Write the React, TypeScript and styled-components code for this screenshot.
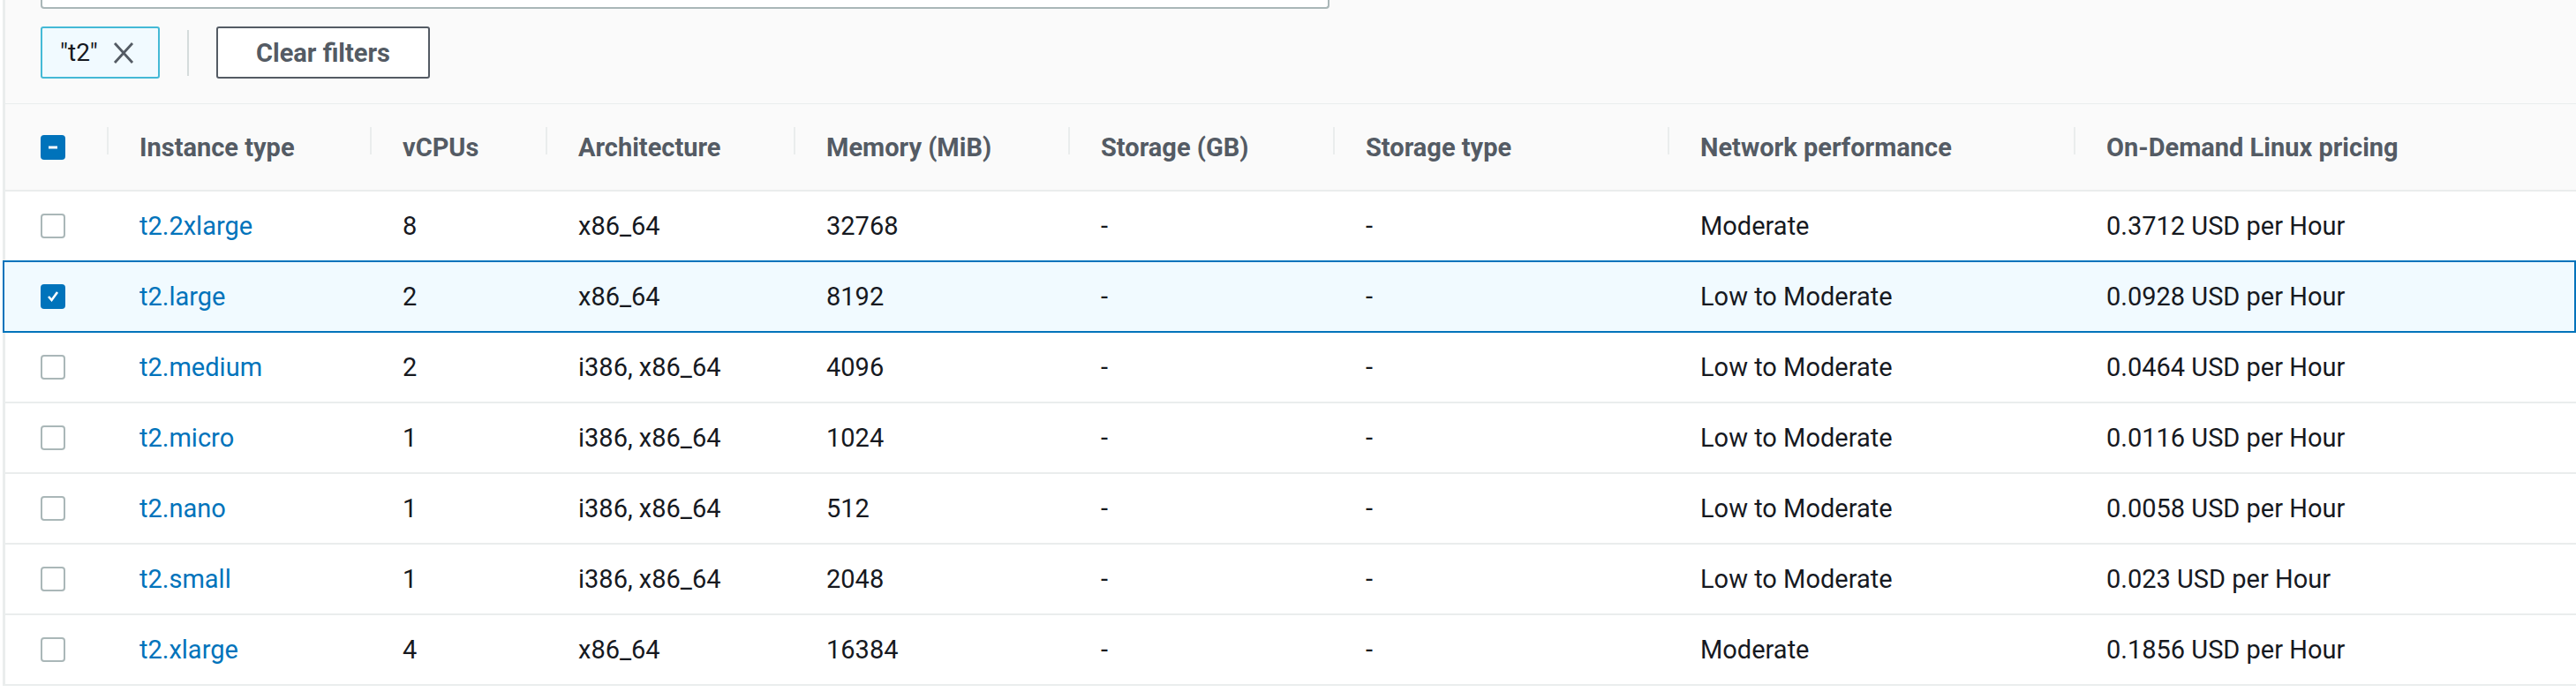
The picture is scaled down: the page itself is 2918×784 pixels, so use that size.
import React from "react";
import styled, { createGlobalStyle, css } from "styled-components";

const cols = "115px 298px 199px 281px 311px 300px 379px 460px 1fr";

const headers = [
  "Instance type",
  "vCPUs",
  "Architecture",
  "Memory (MiB)",
  "Storage (GB)",
  "Storage type",
  "Network performance",
  "On-Demand Linux pricing",
];

const rows = [
  ["t2.2xlarge", "8", "x86_64", "32768", "Moderate", "0.3712 USD per Hour"],
  ["t2.large", "2", "x86_64", "8192", "Low to Moderate", "0.0928 USD per Hour"],
  ["t2.medium", "2", "i386, x86_64", "4096", "Low to Moderate", "0.0464 USD per Hour"],
  ["t2.micro", "1", "i386, x86_64", "1024", "Low to Moderate", "0.0116 USD per Hour"],
  ["t2.nano", "1", "i386, x86_64", "512", "Low to Moderate", "0.0058 USD per Hour"],
  ["t2.small", "1", "i386, x86_64", "2048", "Low to Moderate", "0.023 USD per Hour"],
  ["t2.xlarge", "4", "x86_64", "16384", "Moderate", "0.1856 USD per Hour"],
];

export default function App() {
  return (
    <>
      <Global />
      <S.Page>
        <S.Toolbar>
          <S.Search />
          <S.Filters>
            <S.Token>
              "t2"
              <svg width="26" height="28" viewBox="0 0 26 28">
                <path d="M3 3 L23 25 M23 3 L3 25" stroke="#545b64" strokeWidth="2.8" fill="none" />
              </svg>
            </S.Token>
            <S.Divider />
            <S.Button>Clear filters</S.Button>
          </S.Filters>
        </S.Toolbar>
        <S.Head>
          <S.HeadCell $first>
            <S.Check $on>
              <svg width="16" height="16" viewBox="0 0 16 16">
                <path d="M3 8 H13" stroke="#fff" strokeWidth="3" />
              </svg>
            </S.Check>
          </S.HeadCell>
          {headers.map((h) => (
            <S.HeadCell key={h}>
              <S.Sep />
              {h}
            </S.HeadCell>
          ))}
          <S.HeadCell />
        </S.Head>
        {rows.map((r, i) => (
          <S.Row key={r[0]} $selected={i === 1}>
            <S.Cell $first>
              <S.Check $on={i === 1}>
                {i === 1 && (
                  <svg width="18" height="18" viewBox="0 0 18 18">
                    <path d="M4 9 L7.5 13 L14 4" stroke="#fff" strokeWidth="2.6" fill="none" />
                  </svg>
                )}
              </S.Check>
            </S.Cell>
            <S.Cell>
              <S.Link>{r[0]}</S.Link>
            </S.Cell>
            <S.Cell>{r[1]}</S.Cell>
            <S.Cell>{r[2]}</S.Cell>
            <S.Cell>{r[3]}</S.Cell>
            <S.Cell>-</S.Cell>
            <S.Cell>-</S.Cell>
            <S.Cell>{r[4]}</S.Cell>
            <S.Cell>{r[5]}</S.Cell>
            <S.Cell />
          </S.Row>
        ))}
      </S.Page>
    </>
  );
}

const Global = createGlobalStyle`
  body {
    margin: 0;
    background: #fff;
    font-family: Roboto, "Liberation Sans", sans-serif;
    color: #16191f;
  }
`;

const S = {
  Page: styled.div`
    border-left: 3px solid #eaeded;
    margin-left: 3px;
    width: 2912px;
  `,
  Toolbar: styled.div`
    background: #fafafa;
    height: 117px;
    border-bottom: 1px solid #eaeded;
    padding-left: 40px;
  `,
  Search: styled.div`
    width: 1456px;
    height: 8px;
    border: 2px solid #aab7b8;
    border-top: none;
    border-radius: 0 0 4px 4px;
    background: #fff;
  `,
  Filters: styled.div`
    display: flex;
    align-items: center;
    margin-top: 20px;
    height: 59px;
  `,
  Token: styled.div`
    display: flex;
    align-items: center;
    gap: 16px;
    box-sizing: border-box;
    width: 135px;
    height: 59px;
    padding-left: 20px;
    border: 2px solid #44b9d6;
    border-radius: 3px;
    background: #f1faff;
    font-size: 28px;
  `,
  Divider: styled.div`
    width: 2px;
    height: 52px;
    background: #d5dbdb;
    margin: 0 31px;
  `,
  Button: styled.div`
    box-sizing: border-box;
    width: 242px;
    height: 59px;
    border: 2px solid #545b64;
    border-radius: 3px;
    background: #fff;
    display: flex;
    align-items: center;
    justify-content: center;
    font-weight: 700;
    font-size: 29px;
    color: #545b64;
  `,
  Head: styled.div`
    display: grid;
    grid-template-columns: ${cols};
    grid-template-rows: 1fr;
    height: 99px;
    background: #fafafa;
    border-bottom: 2px solid #eaeded;
    box-sizing: border-box;
  `,
  HeadCell: styled.div<{ $first?: boolean }>`
    position: relative;
    display: flex;
    align-items: center;
    padding-top: 16px;
    padding-left: ${(p) => (p.$first ? "40px" : "37px")};
    font-weight: 700;
    font-size: 29px;
    color: #545b64;
    white-space: nowrap;
  `,
  Sep: styled.div`
    position: absolute;
    left: 0;
    top: 26px;
    bottom: 24px;
    width: 2px;
    background: #eaeded;
  `,
  Row: styled.div<{ $selected?: boolean }>`
    display: grid;
    grid-template-columns: ${cols};
    grid-template-rows: 1fr;
    height: 80px;
    box-sizing: border-box;
    border-bottom: 2px solid #eaeded;
    ${(p) =>
      p.$selected &&
      css`
        background: #f1faff;
        border: 2px solid #0073bb;
        margin-top: -2px;
        height: 82px;
        margin-left: -3px;
        padding-left: 1px;
      `}
  `,
  Cell: styled.div<{ $first?: boolean }>`
    display: flex;
    align-items: center;
    padding-top: 14px;
    padding-left: ${(p) => (p.$first ? "40px" : "37px")};
    font-size: 29px;
    color: #16191f;
    white-space: nowrap;
  `,
  Link: styled.span`
    color: #0073bb;
  `,
  Check: styled.div<{ $on?: boolean }>`
    box-sizing: border-box;
    width: 28px;
    height: 28px;
    border-radius: 4px;
    display: flex;
    align-items: center;
    justify-content: center;
    ${(p) =>
      p.$on
        ? css`
            background: #0073bb;
          `
        : css`
            border: 2px solid #aab7b8;
            background: #fff;
          `}
  `,
};
